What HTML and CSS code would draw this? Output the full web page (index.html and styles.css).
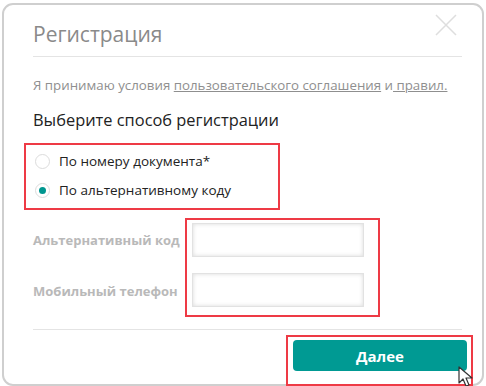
FILE: index.html
```html
<!DOCTYPE html>
<html lang="ru">
<head>
    <meta charset="UTF-8">
    <meta name="viewport" content="width=device-width, initial-scale=1.0">
    <title>Регистрация</title>
    <link rel="stylesheet" href="styles.css">
</head>
<body>
    <div class="modal">
        <div class="modal-header">
            <h2 class="modal-title">Регистрация</h2>
            <span class="close">
                <svg width="22" height="22" viewBox="0 0 22 22"><path d="M1 1 L21 21 M21 1 L1 21" stroke="#dedede" stroke-width="1.5" fill="none"/></svg>
            </span>
        </div>

        <div class="modal-body">
            <p class="terms">Я принимаю условия <a href="#">пользовательского соглашения</a> и<a href="#"> правил.</a></p>
            <h3 class="choose">Выберите способ регистрации</h3>

            <div class="mark radios">
                <label class="radio"><span class="dot"></span>По номеру документа*</label>
                <label class="radio checked"><span class="dot"></span>По альтернативному коду</label>
            </div>

            <div class="fields">
                <div class="labels">
                    <span class="field-label">Альтернативный код</span>
                    <span class="field-label">Мобильный телефон</span>
                </div>
                <div class="mark inputs">
                    <input class="input" type="text">
                    <input class="input" type="text">
                </div>
            </div>
        </div>

        <div class="modal-footer">
            <div class="mark btn-wrap">
                <button class="btn">Далее</button>
            </div>
            <svg class="cursor" width="18" height="22" viewBox="0 0 18 22"><path d="M1 1 L1 17 L5 13 L8 20 L11 19 L8 12 L14 12 Z" fill="#fff" stroke="#333" stroke-width="1.2" stroke-linejoin="round"/></svg>
        </div>
    </div>
</body>
</html>
```

FILE: styles.css
```css
* {
    box-sizing: border-box;
}

body {
    margin: 0;
    background: #fff;
    font-family: "Open Sans", "Noto Sans", sans-serif;
}

.modal {
    position: relative;
    margin: 3px 2px 0 2px;
    height: 383px;
    border: 2px solid #cfcfcf;
    border-radius: 11px;
    background: #fff;
    padding: 0 20px 0 29px;
}

.modal-header {
    display: flex;
    justify-content: space-between;
    align-items: center;
    height: 52px;
    border-bottom: 1px solid #e4e4e4;
}

.modal-title {
    margin: 0;
    font-size: 21px;
    font-weight: 400;
    color: #8a8a8a;
    padding-top: 6px;
}

.close {
    display: flex;
    margin-right: 5px;
    margin-top: -12px;
}

.modal-body {
    padding-top: 19px;
}

.terms {
    margin: 0;
    font-size: 13.3px;
    color: #8f8f8f;
}

.terms a {
    color: #8f8f8f;
    text-decoration: underline;
}

.choose {
    margin: 14px 0 0 0;
    font-size: 16.4px;
    font-weight: 400;
    color: #222;
}

.mark {
    border: 2px solid #ee3a45;
}

.radios {
    margin: 12px 0 0 -9px;
    width: 256px;
    height: 67px;
    padding: 7px 0 0 9px;
    display: flex;
    flex-direction: column;
    gap: 11px;
}

.radio {
    display: flex;
    align-items: center;
    gap: 9px;
    font-size: 13.5px;
    color: #222;
}

.dot {
    width: 15px;
    height: 15px;
    border-radius: 50%;
    border: 1px solid #dcdcdc;
    background: #fff;
    position: relative;
}

.checked .dot::after {
    content: "";
    position: absolute;
    left: 3px;
    top: 3px;
    width: 7px;
    height: 7px;
    border-radius: 50%;
    background: #00968f;
}

.fields {
    display: flex;
    margin-top: 8px;
}

.labels {
    display: flex;
    flex-direction: column;
    padding-top: 13px;
    gap: 33px;
    width: 152px;
}

.field-label {
    font-size: 13px;
    font-weight: 700;
    color: #b9b9b9;
}

.inputs {
    width: 195px;
    height: 99px;
    padding: 3px 0 0 5px;
    display: flex;
    flex-direction: column;
    gap: 16px;
}

.input {
    width: 172px;
    height: 34px;
    border: 1px solid #e2e2e2;
    box-shadow: inset 0 0 4px rgba(0, 0, 0, 0.15);
    background: #fff;
}

.modal-footer {
    position: absolute;
    left: 29px;
    right: 20px;
    top: 324px;
    border-top: 1px solid #e4e4e4;
    display: flex;
    justify-content: flex-end;
    padding-top: 5px;
}

.btn-wrap {
    width: 187px;
    height: 51px;
    margin-right: -11px;
    padding: 3px 0 0 5px;
}

.btn {
    width: 174px;
    height: 31px;
    border: none;
    border-radius: 4px;
    background: #009a93;
    color: #fff;
    font-family: "Open Sans", sans-serif;
    font-size: 15px;
    font-weight: 700;
}

.cursor {
    position: absolute;
    right: -14px;
    top: 36px;
}
```
